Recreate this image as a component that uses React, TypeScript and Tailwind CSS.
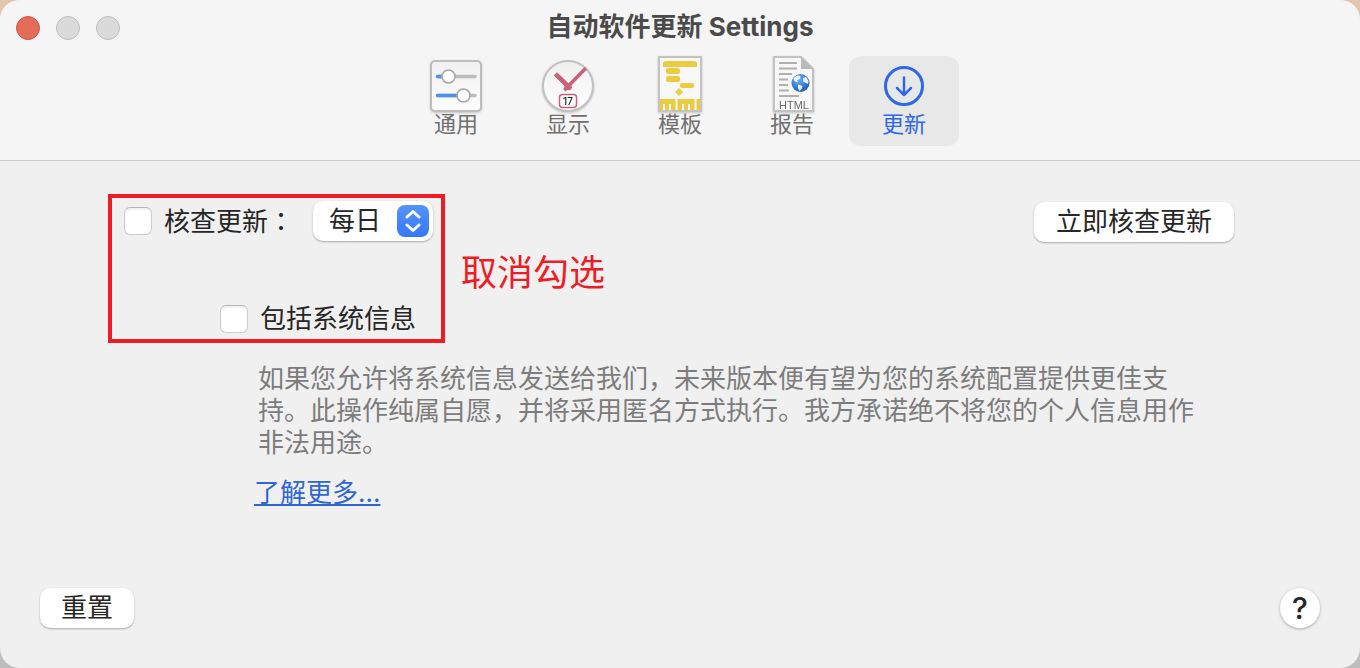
import { useState } from 'react';
import type { ReactNode } from 'react';

const GeneralIcon = () => (
  <svg width="56" height="56" viewBox="0 0 56 56" fill="none" className="overflow-visible drop-shadow-[0_1px_1px_rgba(0,0,0,0.2)]">
    <defs>
      <linearGradient id="generalFill" x1="0" y1="0" x2="0" y2="1">
        <stop offset="0" stopColor="#f0f0f0" />
        <stop offset="1" stopColor="#fdfdfd" />
      </linearGradient>
    </defs>
    <rect x="3" y="5" width="50" height="50" rx="4" fill="url(#generalFill)" stroke="#bdbdbd" strokeWidth="2" />
    <path d="M9.500 20.500H47M9.500 39.500H47" stroke="#bcbcbc" strokeWidth="3.500" strokeLinecap="round" />
    <path d="M9.500 20.500H20M9.500 39.500H34" stroke="#4f8ff0" strokeWidth="3.500" strokeLinecap="round" />
    <circle cx="20.500" cy="20.500" r="6.500" fill="#fff" stroke="#a6a6a6" strokeWidth="1.500" />
    <circle cx="35.500" cy="39.500" r="6.500" fill="#fff" stroke="#a6a6a6" strokeWidth="1.500" />
  </svg>
);

const DisplayIcon = () => (
  <svg width="56" height="56" viewBox="0 0 56 56" fill="none" className="overflow-visible drop-shadow-[0_1px_1px_rgba(0,0,0,0.2)]">
    <defs>
      <linearGradient id="displayFill" x1="0" y1="0" x2="0" y2="1">
        <stop offset="0" stopColor="#efefef" />
        <stop offset="1" stopColor="#fff" />
      </linearGradient>
    </defs>
    <circle cx="28" cy="30" r="25" fill="url(#displayFill)" stroke="#c1c1c1" strokeWidth="2" />
    <path d="M17 19.500L31 33" stroke="#cb6079" strokeWidth="4" />
    <path d="M44.500 13.500L25.500 33" stroke="#cb6079" strokeWidth="3.500" strokeLinecap="square" />
    <path d="M17 19.500L28 30" stroke="#cb6079" strokeWidth="4.500" strokeLinecap="square" />
    <circle cx="28" cy="30.500" r="3.500" fill="#cb6079" />
    <rect x="19.500" y="38.500" width="17" height="13" rx="3" fill="#fff" stroke="#cb6079" strokeWidth="1.500" />
    <text x="28" y="48.500" textAnchor="middle" fontSize="10" fontWeight="500" fontFamily="Inter, sans-serif" fill="#222">
      17
    </text>
  </svg>
);

const TemplateIcon = () => (
  <svg width="56" height="56" viewBox="0 0 56 56" fill="none" className="overflow-visible drop-shadow-[0_1px_1px_rgba(0,0,0,0.2)]">
    <rect x="7" y="1" width="42" height="54" fill="#f8f8f8" stroke="#c3c3c3" strokeWidth="2" />
    <g fill="#eccb3f">
      <path d="M11 11V8a3 3 0 0 1 3-3H42a3 3 0 0 1 3 3V11Z" />
      <rect x="14" y="12" width="14" height="6" rx="2" />
      <rect x="14" y="20" width="14" height="6" rx="2" />
      <rect x="28" y="27" width="14" height="5" rx="2" />
      <path d="M27 32.500L30.500 36L27 39.500L23.500 36Z" stroke="#eccb3f" strokeLinejoin="round" />
      <rect x="8" y="43" width="40" height="11" />
    </g>
    <path d="M12 54V48M18 54V48M24.500 54V43M31 54V48M37 54V48M43.500 54V43" stroke="#f8f8f8" strokeWidth="2" />
  </svg>
);

const ReportIcon = () => (
  <svg width="56" height="56" viewBox="0 0 56 56" fill="none" className="overflow-visible drop-shadow-[0_1px_1px_rgba(0,0,0,0.2)]">
    <defs>
      <radialGradient id="globeFill" cx="0.4" cy="0.3" r="0.75">
        <stop offset="0" stopColor="#6bb2ff" />
        <stop offset="1" stopColor="#1758bb" />
      </radialGradient>
    </defs>
    <path d="M10 1H37L49 13V55H10Z" fill="#f7f7f7" stroke="#c2c2c2" strokeWidth="2" />
    <path d="M37 1V13H49Z" fill="#b9b9b9" />
    <path
      d="M15 7H33M15 12.500H33M15 18H28M15 23.500H24M15 29H24M15 34.500H25M15 40H35"
      stroke="#b0b0b0"
      strokeWidth="2"
    />
    <circle cx="36.500" cy="27" r="9" fill="url(#globeFill)" />
    <path d="M29.500 22l4-2.500 3 .5-.5 2.500-3 2 1 2-2-.5-2-1.500zM39 22l3-1 2.500 4-.5 3-2-1-2.500-1zM34 28.500l4.500 1.500-1 3-2 2-1.500-3z" fill="#eef6f5" />
    <text x="30" y="52.500" textAnchor="middle" fontSize="11" fontFamily="Liberation Sans, sans-serif" fill="#6c6c6c">
      HTML
    </text>
  </svg>
);

const UpdateIcon = () => (
  <svg width="56" height="56" viewBox="0 0 56 56" fill="none" stroke="#2f68e8" strokeLinecap="round" strokeLinejoin="round">
    <circle cx="28" cy="30" r="18.500" strokeWidth="3" />
    <path d="M28 21.500V38.500M21 32L28 39L35 32" strokeWidth="2.500" />
  </svg>
);

const tabs: { id: string; label: string; icon: ReactNode }[] = [
  { id: 'general', label: '通用', icon: <GeneralIcon /> },
  { id: 'display', label: '显示', icon: <DisplayIcon /> },
  { id: 'template', label: '模板', icon: <TemplateIcon /> },
  { id: 'report', label: '报告', icon: <ReportIcon /> },
  { id: 'update', label: '更新', icon: <UpdateIcon /> },
];

const checkboxClass =
  'h-7 w-7 shrink-0 appearance-none rounded-md border border-[#cdcdcd] border-t-[#b5b5b5] bg-white shadow-[inset_0_2px_2px_rgba(0,0,0,0.06)] checked:bg-[#3b7cf5]';

const buttonClass =
  'h-10 rounded-[10px] bg-white text-[26px] leading-8 shadow-[0_1px_2px_rgba(0,0,0,0.3)]';

const App = () => {
  const [active, setActive] = useState('update');
  const [checkUpdates, setCheckUpdates] = useState(false);
  const [includeInfo, setIncludeInfo] = useState(false);

  return (
    <div className="min-h-screen bg-linear-to-b from-[#e2c7ad] to-[#bdbdbd] font-['Inter','Noto_Sans_CJK_SC',sans-serif] text-[#262626]">
      <div className="flex min-h-screen flex-col overflow-hidden rounded-[20px] bg-[#f0f0f0]">

        {/* Title bar and toolbar */}
        <header className="border-b border-[#cbcbcb] bg-[#f5f5f5] pb-3.5">
          <div className="grid h-14 grid-cols-[1fr_auto_1fr] items-center px-4">
            <div className="flex gap-4">
              <button aria-label="Close" className="h-6 w-6 rounded-full border border-[#d2553f] bg-[#e56c5a]" />
              <button aria-label="Minimize" className="h-6 w-6 rounded-full border border-[#bdbdbd] bg-[#dadada]" />
              <button aria-label="Zoom" className="h-6 w-6 rounded-full border border-[#bdbdbd] bg-[#dadada]" />
            </div>
            <h1 className="pb-0.5 text-[26px] leading-8 font-bold text-[#4a4a4a] [font-variant-ligatures:none]">
              自动软件更新 Settings
            </h1>
          </div>

          <nav className="flex justify-center gap-0.5">
            {tabs.map((tab) => (
              <button
                key={tab.id}
                onClick={() => setActive(tab.id)}
                className={`flex h-[90px] w-[110px] flex-col items-center rounded-xl text-[22px] leading-6 ${
                  active === tab.id ? 'bg-[#e8e8e8] text-[#2f68e8]' : 'text-[#707070]'
                }`}
              >
                {tab.icon}
                {tab.label}
              </button>
            ))}
          </nav>
        </header>

        <main className="flex flex-1 flex-col pt-[33px]">
          <div className="flex items-center pr-[126px] pl-[108px]">
            <div className="flex w-[337px] flex-col gap-[60px] border-4 border-[#ee1c25] px-3 pt-[3px] pb-0.5">
              <div className="flex items-center text-[26px] leading-8">
                <input
                  id="check-updates"
                  type="checkbox"
                  checked={checkUpdates}
                  onChange={(e) => setCheckUpdates(e.target.checked)}
                  className={checkboxClass}
                />
                <label htmlFor="check-updates" className="pl-3">
                  核查更新<span className="font-['Noto_Sans_CJK_TC',sans-serif]">：</span>
                </label>
                <div className="relative -mr-1 ml-auto">
                  <select
                    aria-label="核查更新"
                    className="block h-10 w-[120px] appearance-none rounded-[10px] bg-white pl-4 text-[26px] leading-8 shadow-[0_1px_2px_rgba(0,0,0,0.3)]"
                  >
                    <option>每日</option>
                    <option>每周</option>
                    <option>每月</option>
                  </select>
                  <span className="pointer-events-none absolute top-1 right-1 flex h-8 w-8 items-center justify-center rounded-lg bg-linear-to-b from-[#5593fb] to-[#3577f8]">
                    <svg width="16" height="24" viewBox="0 0 16 24" fill="none" stroke="#fff" strokeWidth="3" strokeLinecap="round" strokeLinejoin="round">
                      <path d="M2 8L8 2.500L14 8M2 16L8 21.500L14 16" />
                    </svg>
                  </span>
                </div>
              </div>

              <div className="flex items-center pl-24 text-[26px] leading-9">
                <input
                  id="include-info"
                  type="checkbox"
                  checked={includeInfo}
                  onChange={(e) => setIncludeInfo(e.target.checked)}
                  className={checkboxClass}
                />
                <label htmlFor="include-info" className="pl-3">包括系统信息</label>
              </div>
            </div>

            <p className="pt-2 pl-4 text-4xl text-[#ee1c25]">取消勾选</p>

            <button className={`${buttonClass} mt-2 ml-auto self-start px-[22px]`}>立即核查更新</button>
          </div>

          <div className="pt-5 pr-[142px] pl-[258px] text-[26px] leading-8">
            <p className="text-[#7c7c7c]">
              如果您允许将系统信息发送给我们，未来版本便有望为您的系统配置提供更佳支持。此操作纯属自愿，并将采用匿名方式执行。我方承诺绝不将您的个人信息用作非法用途。
            </p>
            <a href="#more" className="mt-[18px] -ml-1 inline-block text-[#2f66d6] underline decoration-2 underline-offset-2">
              了解更多...
            </a>
          </div>

          <footer className="mt-auto flex items-center justify-between p-10">
            <button className={`${buttonClass} px-[21px]`}>重置</button>
            <button
              aria-label="Help"
              className="h-10 w-10 rounded-full bg-white text-[30px] leading-8 font-medium shadow-[0_1px_3px_rgba(0,0,0,0.3)]"
            >
              ?
            </button>
          </footer>
        </main>

      </div>
    </div>
  );
};

export default App;
